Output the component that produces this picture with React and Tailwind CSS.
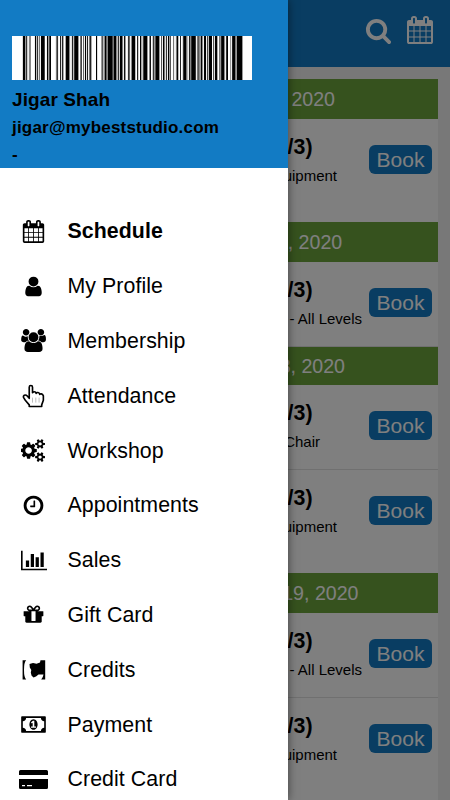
import React from "react";

const smallCog =
  "v140q0 16-149 31-12 27-30 52 51 113 51 138 0 4-4 7-122 71-124 71-8 0-46-47t-52-68q-20 2-30 2t-30-2q-14 21-52 68t-46 47q-2 0-124-71-4-3-4-7 0-25 51-138-18-25-30-52-149-15-149-31v-140q0-16 149-31 13-29 30-52-51-113-51-138 0-4 4-7 4-2 35-20t59-34 30-16q8 0 46 46.5t52 67.5q20-2 30-2t30 2q51-71 92-112l6-2q4 0 124 70 4 3 4 7 0 25-51 138 17 23 30 52 149 15 149 31z";

const paths = {
  calendar:
    "M192 1664h288v-288h-288v288zm352 0h320v-288h-320v288zm-352-352h288v-320h-288v320zm352 0h320v-320h-320v320zm-352-384h288v-288h-288v288zm736 736h320v-288h-320v288zm-384-736h320v-288h-320v288zm768 736h288v-288h-288v288zm-384-352h320v-320h-320v320zm-352-864v-288q0-13-9.5-22.5t-22.5-9.5h-64q-13 0-22.5 9.5t-9.5 22.5v288q0 13 9.5 22.5t22.5 9.5h64q13 0 22.5-9.5t9.5-22.5zm736 864h288v-320h-288v320zm-384-384h320v-288h-320v288zm384 0h288v-288h-288v288zm32-480v-288q0-13-9.5-22.5t-22.5-9.5h-64q-13 0-22.5 9.5t-9.5 22.5v288q0 13 9.5 22.5t22.5 9.5h64q13 0 22.5-9.5t9.5-22.5zm384-64v1280q0 52-38 90t-90 38h-1408q-52 0-90-38t-38-90v-1280q0-52 38-90t90-38h128v-96q0-66 47-113t113-47h64q66 0 113 47t47 113v96h384v-96q0-66 47-113t113-47h64q66 0 113 47t47 113v96h128q52 0 90 38t38 90z",
  search:
    "M1216 832q0-185-131.5-316.5t-316.5-131.5-316.5 131.5-131.5 316.5 131.5 316.5 316.5 131.5 316.5-131.5 131.5-316.5zm512 832q0 52-38 90t-90 38q-54 0-90-38l-343-342q-179 124-399 124-143 0-273.5-55.5t-225-150-150-225-55.5-273.5 55.5-273.5 150-225 225-150 273.5-55.5 273.5 55.5 225 150 150 225 55.5 273.5q0 220-124 399l343 343q37 37 37 90z",
  user: "M1536 1399q0 109-62.5 187t-150.5 78h-854q-88 0-150.5-78t-62.5-187q0-85 8.5-160.5t31.5-152 58.5-131 94-89 134.5-34.5q131 128 313 128t313-128q76 0 134.5 34.5t94 89 58.5 131 31.5 152 8.5 160.5zm-256-887q0 159-112.5 271.5t-271.5 112.5-271.5-112.5-112.5-271.5 112.5-271.5 271.5-112.5 271.5 112.5 112.5 271.5z",
  users:
    "M529 896q-162 5-265 128h-134q-82 0-138-40.5t-56-118.5q0-353 124-353 6 0 43.5 21t97.5 42.5 119 21.5q67 0 133-23-5 37-5 66 0 159 93 299zm1071 637q0 120-73 189.5t-194 69.5h-874q-121 0-194-69.5t-73-189.5q0-53 3.5-103.5t14-109 26.5-108.5 43-97.5 62-81 85.5-53.5 111.5-20q10 0 43 21.5t73 48 107 48 135 21.5 135-21.5 107-48 73-48 43-21.5q61 0 111.5 20t85.5 53.5 62 81 43 97.5 26.5 108.5 14 109 3.5 103.5zm-1024-1277q0 106-75 181t-181 75-181-75-75-181 75-181 181-75 181 75 75 181zm704 384q0 159-112.5 271.5t-271.5 112.5-271.5-112.5-112.5-271.5 112.5-271.5 271.5-112.5 271.5 112.5 112.5 271.5zm576 225q0 78-56 118.5t-138 40.5h-134q-103-123-265-128 93-140 93-299 0-29-5-66 66 23 133 23 59 0 119-21.5t97.5-42.5 43.5-21q124 0 124 353zm-128-609q0 106-75 181t-181 75-181-75-75-181 75-181 181-75 181 75 75 181z",
  cogs:
    "M832 896q0-106-75-181t-181-75-181 75-75 181 75 181 181 75 181-75 75-181zm768 512q0-52-38-90t-90-38-90 38-38 90q0 53 37.5 90.5t90.5 37.5 90.5-37.5 37.5-90.5zm0-1024q0-52-38-90t-90-38-90 38-38 90q0 53 37.5 90.5t90.5 37.5 90.5-37.5 37.5-90.5zm-384 421v185q0 10-7 19.5t-16 10.5l-155 24q-11 35-32 76 34 48 90 115 7 11 7 20 0 12-7 19-23 30-82.5 89.5t-78.5 59.5q-11 0-21-7l-115-90q-37 19-77 31-11 108-23 155-7 24-30 24h-186q-11 0-20-7.5t-10-17.5l-23-153q-34-10-75-31l-118 89q-7 7-20 7-11 0-21-8-144-133-144-160 0-9 7-19 10-14 41-53t47-61q-23-44-35-82l-152-24q-10-1-17-9.5t-7-19.5v-185q0-10 7-19.5t16-10.5l155-24q11-35 32-76-34-48-90-115-7-11-7-20 0-12 7-20 22-30 82-89t79-59q11 0 21 7l115 90q34-18 77-32 11-108 23-154 7-24 30-24h186q11 0 20 7.5t10 17.5l23 153q34 10 75 31l118-89q8-7 20-7 11 0 21 8 144 133 144 160 0 8-7 19-12 16-42 54t-45 60q23 48 34 82l152 23q10 2 17 10.5t7 19.5z" +
    "M1856 1338" + smallCog + "M1856 314" + smallCog,
  clock:
    "M1024 544v448q0 14-9 23t-23 9h-320q-14 0-23-9t-9-23v-64q0-14 9-23t23-9h224v-352q0-14 9-23t23-9h64q14 0 23 9t9 23zm416 352q0-148-73-273t-198-198-273-73-273 73-198 198-73 273 73 273 198 198 273 73 273-73 198-198 73-273zm224 0q0 209-103 385.5t-279.5 279.5-385.5 103-385.5-103-279.5-279.5-103-385.5 103-385.5 279.5-279.5 385.5-103 385.5 103 279.5 279.5 103 385.5z",
  chart:
    "M640 896v512h-256v-512h256zm384-512v1024h-256v-1024h256zm1024 1152v128h-2048v-1536h128v1408h1920zm-640-896v768h-256v-768h256zm384-384v1152h-256v-1152h256z",
  gift: "M1056 1356v-716h-320v716q0 25 18 38.5t46 13.5h192q28 0 46-13.5t18-38.5zm-456-844h195l-126-161q-26-31-69-31-40 0-68 28t-28 68 28 68 68 28zm688-96q0-40-28-68t-68-28q-43 0-69 31l-125 161h194q40 0 68-28t28-68zm376 256v320q0 14-9 23t-23 9h-96v416q0 40-28 68t-68 28h-1088q-40 0-68-28t-28-68v-416h-96q-14 0-23-9t-9-23v-320q0-14 9-23t23-9h440q-93 0-158.5-65.5t-65.5-158.5 65.5-158.5 158.5-65.5q107 0 168 77l128 165 128-165q61-77 168-77 93 0 158.5 65.5t65.5 158.5-65.5 158.5-158.5 65.5h440q14 0 23 9t9 23z",
  money:
    "M768 1152h384v-96h-128v-448h-114l-148 137 77 80q42-37 55-57h2v288h-128v96zm512-256q0 70-21 142t-59.5 134-101.5 101-138 39-138-39-101.5-101-59.5-134-21-142 21-142 59.5-134 101.5-101 138-39 138 39 101.5 101 59.5 134 21 142zm512 256v-512q-106 0-181-75t-75-181h-1152q0 106-75 181t-181 75v512q106 0 181 75t75 181h1152q0-106 75-181t181-75zm128-832v1152q0 26-19 45t-45 19h-1792q-26 0-45-19t-19-45v-1152q0-26 19-45t45-19h1792q26 0 45 19t19 45z",
};

function Glyph({ name, viewBox = "0 0 1792 1792", className = "h-[23px] w-[23px]" }) {
  return (
    <svg viewBox={viewBox} className={className} fill="currentColor">
      <path d={paths[name]} />
    </svg>
  );
}

function HandIcon() {
  return (
    <svg
      viewBox="0 0 70 72"
      className="h-6 w-[23px]"
      fill="none"
      stroke="currentColor"
      strokeWidth="5"
      strokeLinejoin="round"
      strokeLinecap="round"
    >
      <path d="M22 42V9q0-5 5-5t5 5V26q1-3 5.500-3t5.500 5q1-3 5.500-2.500T54 31q1-2 5-1.500t6 6V49L60 63V68H22V63L10 49 5 41Q3 36 7 33.500q5-2 9 2.500l6 7" />
      <path d="M32 42V55M42 42V55M52 42V55" strokeWidth="2" opacity="0.4" />
    </svg>
  );
}

function TicketIcon() {
  return (
    <svg viewBox="0 0 24 20" className="h-5 w-6" fill="currentColor">
      <path d="M.6.3h3.600Q2 2.200 2 10t2.200 9.600H.6z" />
      <path d="M7.500 4 11 3 14.500 3.800 18 2.500 18.500.3H23.200V19.600H19.200Q21 17.500 21.500 14.500H16.500L14 16.500 11.500 17.500 9.500 15.500 8.800 12.500 9.300 10 7.800 7.500z" />
    </svg>
  );
}

function CardIcon() {
  return (
    <svg viewBox="0 0 29 19" className="h-[19px] w-[29px] shrink-0" fill="currentColor">
      <path d="M1.500 0h26Q29 0 29 1.500V5H0V1.500Q0 0 1.500 0zM0 9h29v8.500q0 1.500-1.500 1.500h-26Q0 19 0 17.500zM3 15v1.200h3V15zm5 0v1.200h5V15z" fillRule="evenodd" />
    </svg>
  );
}

const menu = [
  ["Schedule", <Glyph name="calendar" />],
  ["My Profile", <Glyph name="user" />],
  ["Membership", <Glyph name="users" viewBox="-64 0 1920 1792" className="h-[23px] w-[25px]" />],
  ["Attendance", <HandIcon />],
  ["Workshop", <Glyph name="cogs" viewBox="0 0 1920 1792" className="h-[23px] w-[25px]" />],
  ["Appointments", <Glyph name="clock" />],
  ["Sales", <Glyph name="chart" viewBox="0 0 2048 1792" className="h-[23px] w-[26px]" />],
  ["Gift Card", <Glyph name="gift" />],
  ["Credits", <TicketIcon />],
  ["Payment", <Glyph name="money" viewBox="0 0 1920 1792" className="h-[23px] w-[25px]" />],
  ["Credit Card", <CardIcon />],
];

// One hexadecimal grey level per pixel column, in groups of ten.
const bars = [
  "ffffffffff", "d0093ce88f", "ffe0b3d7e0", "004fe0940f", "fffe73ef2d",
  "2afa0008ed", "2b30009f74", "f6e0d2e72a", "ffff0dfff9", "5b80680000",
  "47008b3c00", "7e19fe36e8", "000bf2cf0a", "c40009f81f", "c3950009f5",
  "e07d3e095f", "f7ee70bf2f", "d3007be283", "0003e75890", "8e00e4b000",
  "f5d00af792", "008e30ff9e", "2007900000", "9fffffffff",
].join("");

function Barcode() {
  return (
    <svg viewBox="0 0 240 44" className="h-11 w-60" shapeRendering="crispEdges">
      <rect width="240" height="44" fill="#fff" />
      {[...bars].map((c, i) => (
        <rect key={i} x={i} y="0" width="1" height="44" fill={`#${c}${c}${c}`} />
      ))}
    </svg>
  );
}

function DateBar({ className, width, children }) {
  return (
    <div className={`shrink-0 bg-[#6ca43d] text-[19.6px] text-white ${className}`}>
      <div className={`text-right whitespace-nowrap ${width}`}>{children}</div>
    </div>
  );
}

function ClassRow({ sub, width, className }) {
  return (
    <div className={`flex shrink-0 items-start justify-between pr-1.5 ${className}`}>
      <div className="pt-4 whitespace-nowrap text-black">
        <div className="w-[300.5px] text-right text-[21.33px] leading-6 font-bold">(1/3)</div>
        <div className={`mt-[7px] text-right text-[15px] leading-5 ${width}`}>{sub}</div>
      </div>
      <button className="mt-[26px] h-[29px] w-[63px] rounded-md bg-[#127bc4] text-[21px] leading-[29px] text-white">
        Book
      </button>
    </div>
  );
}

export default function App() {
  return (
    <div className="relative h-[800px] w-[450px] overflow-hidden bg-[#f0f0f0] font-['Liberation_Sans',Arial,sans-serif]">
      <header className="flex h-[67px] items-start justify-end bg-[#127bc4] pr-4 text-white">
        <Glyph name="search" className="mt-[17px] mr-3.5 h-[27px] w-[27px]" />
        <Glyph name="calendar" className="mt-4 h-7 w-7" />
      </header>
      <main className="mx-3 mt-3 flex flex-col bg-white">
        <DateBar className="h-10 leading-10" width="w-[323px]">2020</DateBar>
        <ClassRow className="h-[103px]" sub="Equipment" width="w-[325px]" />
        <DateBar className="h-10 leading-10" width="w-[330.2px]">, 2020</DateBar>
        <ClassRow className="h-[85px] border-b border-[#e0e0e0]" sub="- All Levels" width="w-[350px]" />
        <DateBar className="h-[38px] leading-[38px]" width="w-[333px]">3, 2020</DateBar>
        <ClassRow className="h-[85px] border-b border-[#e0e0e0]" sub="Chair" width="w-[308px]" />
        <ClassRow className="h-[103px]" sub="Equipment" width="w-[325px]" />
        <DateBar className="h-10 leading-10" width="w-[346.5px]">19, 2020</DateBar>
        <ClassRow className="h-[85px] border-b border-[#e0e0e0]" sub="- All Levels" width="w-[350px]" />
        <ClassRow className="h-[103px]" sub="Equipment" width="w-[325px]" />
      </main>

      <div className="absolute inset-0 bg-black/50" />

      <aside className="absolute inset-y-0 left-0 w-72 overflow-hidden bg-white text-black shadow-[0_0_9px_rgba(0,0,0,0.5)]">
        <div className="h-[168px] bg-[#127bc4] pt-9 pl-3 font-bold">
          <Barcode />
          <div className="mt-2 text-[19px] leading-6 tracking-[0.1px]">Jigar Shah</div>
          <div className="mt-1 text-[17px] leading-6 tracking-[0.2px]">jigar@mybeststudio.com</div>
          <div className="mt-[3px] text-[17px] leading-6">-</div>
        </div>
        <nav className="flex flex-col pt-9">
          {menu.map(([label, icon], i) => (
            <div key={label} className="flex h-[54.8px] shrink-0 items-center">
              <div className="flex w-[67px] items-center justify-center">{icon}</div>
              <div className={`pt-0.5 pl-[0.5px] text-[21.33px] tracking-[0.07px] ${i === 0 ? "font-bold" : ""}`}>
                {label}
              </div>
            </div>
          ))}
        </nav>
      </aside>
    </div>
  );
}
